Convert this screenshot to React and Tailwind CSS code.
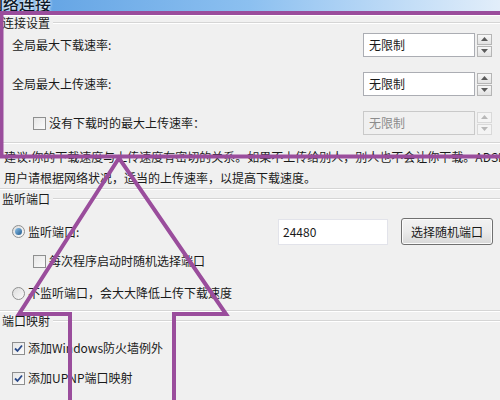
import React from "react";

// Win7 风格的小控件
function Spinner({ disabled }) {
  const arrow = disabled ? "#b8b8b8" : "#5a5a5a";
  const btn =
    "w-[15px] h-[11px] border flex items-center justify-center " +
    (disabled
      ? "border-[#d9d9d9] bg-[#f4f4f4]"
      : "border-[#b5b5b5] bg-gradient-to-b from-[#f7f7f7] to-[#e2e2e2]");
  return (
    <div className="flex flex-col gap-[1px] ml-[2px]">
      <div className={btn}>
        <svg width="7" height="4" viewBox="0 0 7 4">
          <path d="M0 4 L3.5 0 L7 4 Z" fill={arrow} />
        </svg>
      </div>
      <div className={btn}>
        <svg width="7" height="4" viewBox="0 0 7 4">
          <path d="M0 0 L3.5 4 L7 0 Z" fill={arrow} />
        </svg>
      </div>
    </div>
  );
}

function SpinBox({ disabled }) {
  return (
    <div className="flex items-center">
      <div
        className={
          "w-[112px] h-[24px] border flex items-center pl-[5px] " +
          (disabled
            ? "bg-[#f0f0f0] border-[#c9c9c9] text-[#8c8c8c]"
            : "bg-white border-[#abadb3] text-[#1a1a1a]")
        }
      >
        无限制
      </div>
      <Spinner disabled={disabled} />
    </div>
  );
}

function CheckBox({ checked }) {
  return (
    <div className="w-[13px] h-[13px] border border-[#8e8f8f] bg-gradient-to-br from-[#e6e6e6] to-[#fbfbfb] flex items-center justify-center shrink-0">
      {checked && (
        <svg width="9" height="9" viewBox="0 0 9 9">
          <path d="M1 4.5 L3.5 7 L8 1.5" stroke="#2a4a8a" strokeWidth="1.8" fill="none" />
        </svg>
      )}
    </div>
  );
}

function Radio({ checked }) {
  return (
    <div className="w-[13px] h-[13px] rounded-full border border-[#8e8f8f] bg-gradient-to-br from-[#dcdcdc] to-[#fbfbfb] flex items-center justify-center shrink-0">
      {checked && (
        <div className="w-[7px] h-[7px] rounded-full bg-gradient-to-br from-[#8fc3ea] to-[#1d5a8e]" />
      )}
    </div>
  );
}

function GroupHeader({ title }) {
  return (
    <div className="h-[14px] flex items-center">
      <span className="pl-[2px] pr-[3px] leading-[14px]">{title}</span>
      <div className="flex-1 border-t border-[#d5d5d5] border-b border-b-white" />
    </div>
  );
}

function Sep() {
  return <div className="border-t border-[#d5d5d5] border-b border-b-white" />;
}

export default function App() {
  return (
    <div className="w-[500px] h-[400px] overflow-hidden relative bg-[#f0f0f0] text-[12px] text-[#1a1a1a] font-['Noto_Sans_CJK_SC','Noto_Sans',sans-serif]">
      {/* 标题栏 */}
      <div className="h-[12px] overflow-hidden bg-gradient-to-r from-[#5c9fe2] via-[#8cc0f0] to-[#e2eefa]">
        <div className="ml-[-13px] mt-[-5px] text-[16px] leading-[16px] font-medium text-[#0f1a2a] [text-shadow:0_0_3px_white,0_0_3px_white]">
          网络连接
        </div>
      </div>
      <div className="h-[4px] bg-white" />

      {/* 连接设置 */}
      <GroupHeader title="连接设置" />
      <div className="mt-[3px] h-[24px] flex items-center pl-[12px] pr-[8px]">
        <span className="flex-1">全局最大下载速率:</span>
        <SpinBox />
      </div>
      <div className="mt-[15px] h-[24px] flex items-center pl-[12px] pr-[8px]">
        <span className="flex-1">全局最大上传速率:</span>
        <SpinBox />
      </div>
      <div className="mt-[15px] h-[24px] flex items-center pl-[33px] pr-[8px]">
        <CheckBox />
        <span className="flex-1 ml-[3px]">没有下载时的最大上传速率：</span>
        <SpinBox disabled />
      </div>
      <div className="mt-[7px]">
        <Sep />
      </div>

      <p className="pl-[4px] pt-[2px] leading-[21px] whitespace-nowrap">
        建议:你的下载速度与上传速度有密切的关系。如果不上传给别人，别人也不会让你下载。ADSL
        <br />
        用户请根据网络状况，适当的上传速率，以提高下载速度。
      </p>
      <Sep />

      {/* 监听端口 */}
      <div className="mt-[2px]">
        <GroupHeader title="监听端口" />
      </div>
      <div className="mt-[12px] h-[27px] flex items-center pl-[12px] pr-[7px]">
        <Radio checked />
        <span className="ml-[3px] w-[250px]">监听端口:</span>
        <div className="w-[110px] h-[26px] bg-white border border-[#e2e3ea] flex items-center pl-[4px]">
          24480
        </div>
        <div className="ml-auto w-[92px] h-[27px] rounded-[3px] border border-[#707070] bg-gradient-to-b from-[#f2f2f2] via-[#ebebeb] to-[#d8d8d8] flex items-center justify-center shadow-[inset_0_0_0_1px_#fbfbfb]">
          选择随机端口
        </div>
      </div>
      <div className="mt-[6px] h-[20px] flex items-center pl-[33px]">
        <CheckBox />
        <span className="ml-[3px]">每次程序启动时随机选择端口</span>
      </div>
      <div className="mt-[12px] h-[20px] flex items-center pl-[12px]">
        <Radio />
        <span className="ml-[3px]">不监听端口，会大大降低上传下载速度</span>
      </div>
      <div className="mt-[7px]">
        <Sep />
      </div>

      {/* 端口映射 */}
      <div className="mt-[2px]">
        <GroupHeader title="端口映射" />
      </div>
      <div className="mt-[10px] h-[20px] flex items-center pl-[12px]">
        <CheckBox checked />
        <span className="ml-[3px]">添加Windows防火墙例外</span>
      </div>
      <div className="mt-[10px] h-[20px] flex items-center pl-[12px]">
        <CheckBox checked />
        <span className="ml-[3px]">添加UPNP端口映射</span>
      </div>

      {/* 紫色标注 */}
      <svg
        className="absolute inset-0 pointer-events-none"
        width="500"
        height="400"
        viewBox="0 0 500 400"
      >
        <g stroke="#9a4d9c" strokeWidth="4" fill="none" strokeLinejoin="miter">
          <line x1="0" y1="13" x2="500" y2="13" />
          <line x1="1.5" y1="11" x2="1.5" y2="158" />
          <line x1="0" y1="156.5" x2="500" y2="156.5" />
          <polyline points="70,400 70,314 19,314 119,158 226,314 174,314 174,400" />
        </g>
      </svg>
    </div>
  );
}
